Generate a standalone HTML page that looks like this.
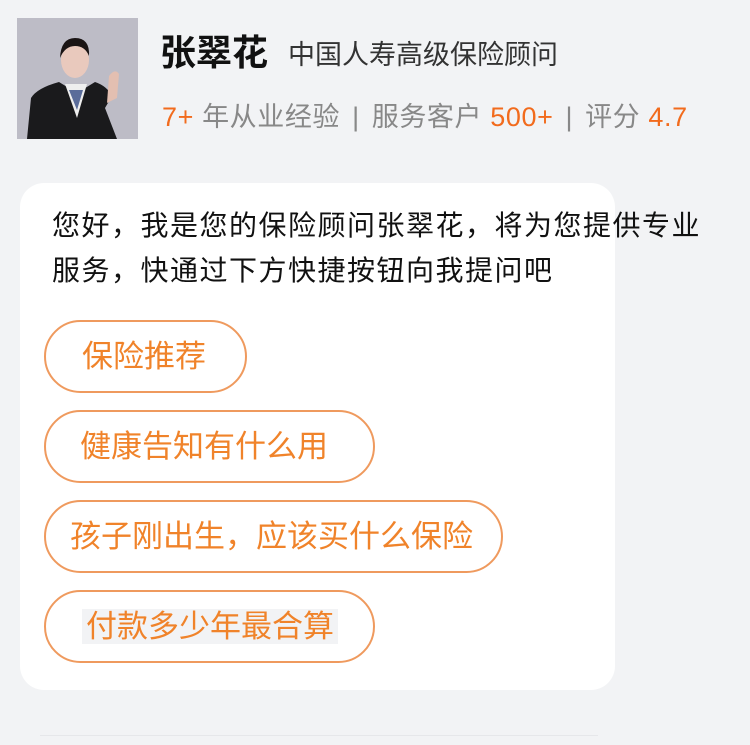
<!DOCTYPE html>
<html><head><meta charset="utf-8"><style>
*{margin:0;padding:0;box-sizing:border-box}
body{width:750px;height:745px;background:#f2f3f5;font-family:"Liberation Sans","Noto Sans CJK SC",sans-serif;position:relative;overflow:hidden}
.photo{position:absolute;left:17px;top:18px;width:121px;height:121px;background:#b9b8c2;overflow:hidden}
.name{position:absolute;left:160px;top:24px;font-size:36px;font-weight:bold;color:#111;white-space:nowrap}
.title{position:absolute;left:288px;top:33px;font-size:27px;color:#333;white-space:nowrap}
.stats{position:absolute;left:162px;top:95px;font-size:27px;letter-spacing:0.6px;color:#888;white-space:nowrap}
.sep{margin:0 12px}
.o{color:#f26b1d}
.card{position:absolute;left:20px;top:183px;width:595px;height:507px;background:#fff;border-radius:24px}
.intro{position:absolute;left:52px;top:203px;font-size:28px;letter-spacing:1.5px;line-height:45px;color:#111;white-space:nowrap}
.btn{position:absolute;left:44px;height:73px;border:2px solid #ef9a5e;border-radius:37px;color:#f0832a;font-size:31px;line-height:69px;white-space:nowrap}
.hl{background:#f2f3f5;padding:0 4px}
.line{position:absolute;left:40px;top:735px;width:558px;height:1px;background:#e6e7ea}
</style></head><body>
<div class="photo"><svg width="121" height="121" viewBox="0 0 121 121">
<rect width="121" height="121" fill="#bdbcc6"/>
<path d="M10 121 L14 80 Q20 70 42 64 L60 75 L78 64 Q90 68 95 78 L88 90 L100 121 Z" fill="#1a1a1c"/>
<path d="M48 66 L60 100 L70 66 Z" fill="#eee"/>
<path d="M52 72 L60 92 L66 72 Z" fill="#5a6c9a"/>
<ellipse cx="58" cy="42" rx="14" ry="18" fill="#e9c9bd"/>
<path d="M43 40 Q44 20 58 20 Q73 20 72 38 Q68 28 58 28 Q48 28 43 40Z" fill="#1a1414"/>
<path d="M90 85 L92 58 Q98 50 102 56 L100 80Z" fill="#e3bfb1"/>
</svg></div>
<div class="name">张翠花</div>
<div class="title">中国人寿高级保险顾问</div>
<div class="stats"><span class="o">7+</span> 年从业经验<span class="sep">|</span>服务客户 <span class="o">500+</span><span class="sep">|</span>评分 <span class="o">4.7</span></div>
<div class="card"></div>
<div class="intro">您好，我是您的保险顾问张翠花，将为您提供专业<br>服务，快通过下方快捷按钮向我提问吧</div>
<div class="btn" style="top:320px;width:203px;padding-left:36px">保险推荐</div>
<div class="btn" style="top:410px;width:331px;padding-left:34px">健康告知有什么用</div>
<div class="btn" style="top:500px;width:459px;padding-left:24px">孩子刚出生，应该买什么保险</div>
<div class="btn" style="top:590px;width:331px;padding-left:36px"><span class="hl">付款多少年最合算</span></div>
<div class="line"></div>
</body></html>
